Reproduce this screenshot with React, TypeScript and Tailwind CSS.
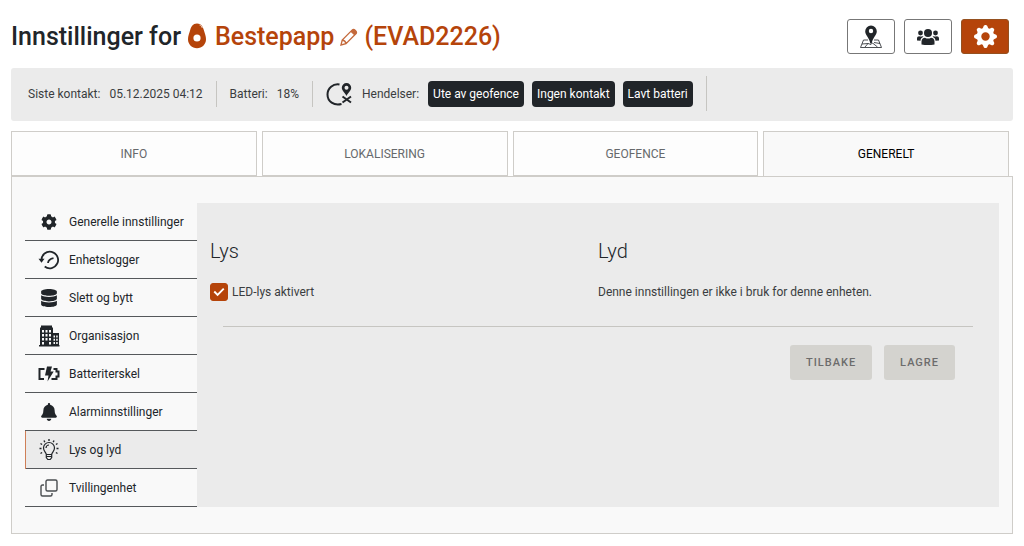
import { useState } from "react";
import type { ReactNode } from "react";
import { BsGearFill } from "react-icons/bs";
import { FaBell, FaCog, FaDatabase } from "react-icons/fa";

const accentColor = "#b5440a";

const tabs = ["INFO", "LOKALISERING", "GEOFENCE", "GENERELT"];

const events = ["Ute av geofence", "Ingen kontakt", "Lavt batteri"];

const menuItems: { label: string; icon: ReactNode }[] = [
  { label: "Generelle innstillinger", icon: <FaCog className="h-4 w-4" /> },
  { label: "Enhetslogger", icon: <HistoryIcon /> },
  { label: "Slett og bytt", icon: <FaDatabase className="h-[18px] w-4" /> },
  { label: "Organisasjon", icon: <BuildingIcon /> },
  { label: "Batteriterskel", icon: <BatteryIcon /> },
  { label: "Alarminnstillinger", icon: <FaBell className="h-[18px] w-4" /> },
  { label: "Lys og lyd", icon: <BulbIcon /> },
  { label: "Tvillingenhet", icon: <TwinIcon /> }
];

export default function App() {
  const [activeTab, setActiveTab] = useState("GENERELT");

  return (
    <main className="bg-white px-[11px] pt-[19px] pb-3 font-['Roboto','Liberation_Sans',sans-serif] text-xs leading-5 font-normal text-[#3a3d40]">
      <Header />
      <StatusBar />
      <nav className="mt-[10px] grid grid-cols-4 gap-[5px] pr-1">
        {tabs.map((tab) => (
          <button
            key={tab}
            type="button"
            onClick={() => setActiveTab(tab)}
            className={
              tab === activeTab
                ? "h-[45px] border border-b-0 border-[#cfcdc9] bg-[#f9f9f9] text-xs text-black"
                : "h-[45px] border border-[#cfcdc9] bg-[#fdfdfd] text-xs text-[#66696c]"
            }
          >
            {tab}
          </button>
        ))}
      </nav>
      <section className="flex border border-[#cfcdc9] bg-[#f9f9f9] px-[13px] pt-[26px] pb-[26px]">
        <SideMenu />
        <LightAndSound />
      </section>
    </main>
  );
}

function Header() {
  return (
    <header className="flex items-center justify-between pr-1">
      <h1 className="flex items-center text-[25px] leading-[35px] font-medium text-[#212529]">
        Innstillinger for
        <TrackerIcon />
        <span className="text-[#b5440a]">Bestepapp</span>
        <button type="button" aria-label="Endre navn" className="mx-1.5">
          <PencilIcon />
        </button>
        <span className="text-[#b5440a]">(EVAD2226)</span>
      </h1>
      <div className="flex gap-[9px]">
        <button
          type="button"
          aria-label="Kart"
          className="flex h-[35px] w-12 items-center justify-center rounded-[3px] border border-[#777] bg-white"
        >
          <MapPinIcon />
        </button>
        <button
          type="button"
          aria-label="Brukere"
          className="flex h-[35px] w-12 items-center justify-center rounded-[3px] border border-[#777] bg-white"
        >
          <PeopleIcon />
        </button>
        <button
          type="button"
          aria-label="Innstillinger"
          className="flex h-[35px] w-12 items-center justify-center rounded-[3px] border border-[#95501f] bg-[#b5440a] text-white"
        >
          <BsGearFill className="h-[23px] w-[23px]" />
        </button>
      </div>
    </header>
  );
}

function StatusBar() {
  return (
    <div className="mt-[14px] flex h-[53px] items-center rounded-[3px] bg-[#ebebeb] pb-0.5 pl-[17px]">
      <span>Siste kontakt:</span>
      <span className="ml-[9px]">05.12.2025 04:12</span>
      <span className="mx-[13px] h-[26px] w-px bg-[#c6c5c1]" />
      <span>Batteri:</span>
      <span className="ml-[9px]">18%</span>
      <span className="mx-[13px] h-[26px] w-px bg-[#c6c5c1]" />
      <GeofenceIcon />
      <span className="ml-2">Hendelser:</span>
      <div className="ml-[9px] flex gap-2">
        {events.map((event) => (
          <span
            key={event}
            className="rounded-[4px] bg-[#212529] px-[5px] py-[3px] text-white"
          >
            {event}
          </span>
        ))}
      </div>
      <span className="ml-[13px] h-[35px] w-px bg-[#c6c5c1]" />
    </div>
  );
}

function SideMenu() {
  const [active, setActive] = useState("Lys og lyd");

  return (
    <ul className="w-[172px] shrink-0">
      {menuItems.map(({ label, icon }) => (
        <li
          key={label}
          className={
            label === active
              ? "border-l border-[#cf7f57] bg-[#ebebeb] pl-0"
              : ""
          }
        >
          <button
            type="button"
            onClick={() => setActive(label)}
            className={
              label === active
                ? "flex h-[38px] w-full items-center border-b border-[#55585b] pl-[11px]"
                : "flex h-[38px] w-full items-center border-b border-[#55585b] pl-3"
            }
          >
            <span className="flex w-6 justify-center text-[#212529]">
              {icon}
            </span>
            <span className="ml-2 whitespace-nowrap text-[#212529]">
              {label}
            </span>
          </button>
        </li>
      ))}
    </ul>
  );
}

function LightAndSound() {
  const [enabled, setEnabled] = useState(true);

  return (
    <form className="min-w-0 flex-1 bg-[#ebebeb] px-[13px] pt-[34px]">
      <div className="grid grid-cols-2">
        <div>
          <h2 className="text-xl leading-7 font-light text-[#212529]">Lys</h2>
          <label className="mt-[17px] flex items-center gap-1">
            <span className="relative flex h-[18px] w-[18px]">
              <input
                type="checkbox"
                checked={enabled}
                onChange={(event) => setEnabled(event.target.checked)}
                className="h-full w-full appearance-none rounded-[3px] border border-[#b5440a] checked:bg-[#b5440a]"
              />
              {enabled && (
                <svg
                  viewBox="0 0 19 19"
                  className="pointer-events-none absolute inset-0"
                  fill="none"
                  stroke="white"
                  strokeWidth="2"
                >
                  <path d="M4.500 9 8 12.500l6.500-6.500" />
                </svg>
              )}
            </span>
            LED-lys aktivert
          </label>
        </div>
        <div>
          <h2 className="text-xl leading-7 font-light text-[#212529]">Lyd</h2>
          <p className="mt-[17px]">
            Denne innstillingen er ikke i bruk for denne enheten.
          </p>
        </div>
      </div>
      <hr className="mx-[13px] mt-6 border-[#c6c5c1]" />
      <div className="mt-[18px] mr-[31px] flex justify-end gap-3">
        <button
          type="button"
          className="h-[35px] rounded-[3px] bg-[#d4d3cf] px-4 text-[11px] font-medium tracking-[1px] text-[#6c6c6c]"
        >
          TILBAKE
        </button>
        <button
          type="button"
          className="h-[35px] rounded-[3px] bg-[#d4d3cf] px-4 text-[11px] font-medium tracking-[1px] text-[#6c6c6c]"
        >
          LAGRE
        </button>
      </div>
    </form>
  );
}

function TrackerIcon() {
  return (
    <svg viewBox="0 0 20 26" className="mr-2 mb-0.5 ml-1.5 h-[26px] w-5">
      <path
        d="M10 .5c4.200 0 5.800 3 6.800 6.500C17.800 10.300 19 13 19 16.300c0 5.200-4 8.900-9 8.900s-9-3.700-9-8.900C1 13 2.200 10.300 3.200 7 4.200 3.500 5.800.5 10 .5Z"
        fill={accentColor}
      />
      <circle cx="10" cy="15" r="3.600" fill="white" />
      <path d="M12.500 2c1.500.5 2.300 1.600 2.800 3" stroke="#f0d2c2" fill="none" />
    </svg>
  );
}

function PencilIcon() {
  return (
    <svg viewBox="0 0 18 18" className="h-[18px] w-[18px]">
      <path
        d="m1 17 1.200-5L12.300 1.900c1.700-1.500 5.200 1.700 3.800 3.600L6 15.700 1 17ZM2.200 12c2 .3 3.400 1.700 3.800 3.700"
        fill="none"
        stroke="#c4693b"
        strokeWidth="1.300"
      />
      <path
        d="m10.500 3.700 1.800-1.800c1.700-1.500 5.200 1.700 3.800 3.600l-1.800 1.800Z"
        fill="#c4693b"
      />
    </svg>
  );
}

function MapPinIcon() {
  return (
    <svg viewBox="0 0 24 24" className="h-6 w-6">
      <path
        d="M9 15H4.500L1.500 22.500h21L19.500 15H15M3 19l6-.5 3 1 1.500-1.500M6 22l3-3.500M13.500 18l5 4M15 17.500l6 1"
        fill="none"
        stroke="#212529"
        strokeWidth="0.800"
      />
      <path
        d="M12 .5A5.800 5.800 0 0 0 6.200 6.300c0 4 4 6 5.100 12.200h1.400c1.100-6.200 5.100-8.200 5.100-12.200A5.800 5.800 0 0 0 12 .5Zm0 3.300a2.200 2.200 0 1 1 0 4.400 2.200 2.200 0 0 1 0-4.400Z"
        fill="#212529"
        fillRule="evenodd"
      />
    </svg>
  );
}

function PeopleIcon() {
  return (
    <svg viewBox="0 0 24 18" className="h-[18px] w-6" fill="#212529">
      <circle cx="12" cy="5" r="4" />
      <circle cx="4.500" cy="5" r="2.400" />
      <circle cx="19.500" cy="5" r="2.400" />
      <path d="M5.500 16.500v-3c0-2.500 1.500-3.800 3.500-3.800 2 1.200 4 1.200 6 0 2 0 3.500 1.300 3.500 3.800v3c-4 .8-9 .8-13 0Z" />
      <path d="M1 12.500v-2C1 9 2 8.200 3.200 8.200c1 .5 2 .5 3.300 0l1 .6c-2 .9-2.800 2-3 3.900L1 12.500ZM23 12.500v-2c0-1.500-1-2.300-2.200-2.300-1 .5-2 .5-3.300 0l-1 .6c2 .9 2.800 2 3 3.900l3.500-.2Z" />
    </svg>
  );
}

function GeofenceIcon() {
  return (
    <svg viewBox="0 0 28 26" className="h-[26px] w-7 shrink-0">
      <path
        d="M13.500 3.500C7 2.300 1.500 7.500 1.500 13.500c0 7 6.500 11.500 14 9.500"
        fill="none"
        stroke="#212529"
        strokeWidth="2"
      />
      <path
        d="M20.500 2A4.700 4.700 0 0 0 15.800 6.700c0 3 3.200 4.900 4.700 8.300 1.500-3.400 4.700-5.300 4.700-8.300A4.700 4.700 0 0 0 20.500 2Zm0 2.800a2 2 0 1 1 0 4 2 2 0 0 1 0-4Z"
        fill="#212529"
        fillRule="evenodd"
      />
      <path
        d="m16.500 15.500 8.500 6M25 15.500l-8.500 6"
        stroke="#212529"
        strokeWidth="2"
      />
    </svg>
  );
}

function HistoryIcon() {
  return (
    <svg viewBox="0 0 22 20" className="h-5 w-[22px]">
      <path
        d="M3.500 10a8.300 8.300 0 1 1 3.200 6.500"
        fill="none"
        stroke="#212529"
        strokeWidth="1.800"
      />
      <path d="M.5 8.800h6l-3 4Z" fill="#212529" />
      <path
        d="M10 13c.3-2.500 2-4.200 5.500-4.800"
        fill="none"
        stroke="#212529"
        strokeWidth="1.800"
      />
    </svg>
  );
}

function BuildingIcon() {
  return (
    <svg viewBox="0 0 22 22" className="h-[22px] w-[22px]">
      <path d="M3 .5h11v2h1V8h6v12h.500v1.500H1V20h1V2.500h1Z" fill="#212529" />
      <path
        d="M4 5h2v2.500H4ZM7.500 5h2v2.500h-2ZM11 5h2v2.500h-2ZM4 9h2v2.500H4ZM7.500 9h2v2.500h-2ZM11 9h2v2.500h-2ZM4 13h2v2.500H4ZM7.500 13h2v2.500h-2ZM11 13h2v2.500h-2ZM4 17h2v2.500H4ZM11 17h2v2.500h-2ZM15.500 10.500H17v2h-1.500ZM18.200 10.500h1.500v2h-1.500ZM15.500 13.700H17v2h-1.500ZM18.200 13.700h1.500v2h-1.500ZM15.500 17H17v2h-1.500ZM18.200 17h1.500v2h-1.500Z"
        fill="#f9f9f9"
      />
    </svg>
  );
}

function BatteryIcon() {
  return (
    <svg viewBox="0 0 22 16" className="h-4 w-[22px]">
      <path
        d="M6.500 3H1.500v10H6M15.500 3h3v2.500h2v5h-2V13h-5"
        fill="none"
        stroke="#212529"
        strokeWidth="2"
      />
      <path d="M9 .5h5l-1.500 5h3.200L9.500 15.500l1-6H7Z" fill="#212529" />
    </svg>
  );
}

function BulbIcon() {
  return (
    <svg
      viewBox="0 0 20 22"
      className="h-[22px] w-5"
      fill="none"
      stroke="#212529"
      strokeWidth="1.200"
    >
      <path d="M7.300 15.500c0-2-2.800-3.300-2.800-6.500a5.500 5.500 0 0 1 11 0c0 3.200-2.800 4.500-2.800 6.500ZM7.300 17.500h5.400M7.300 15.500v3l1.500 2h2.400l1.500-2v-3M7 9a3 3 0 0 1 3-3" />
      <path
        d="M10 0v2M5 1.500l.8 1.600M15 1.500l-.8 1.600M1.500 4.500l1.600 1M18.500 4.500l-1.600 1M.5 9.500h2M17.500 9.500h2M1.500 14.500l1.600-1M18.500 14.500l-1.600-1"
        strokeWidth="1.400"
      />
    </svg>
  );
}

function TwinIcon() {
  return (
    <svg
      viewBox="0 0 18 18"
      className="h-[18px] w-[18px]"
      fill="none"
      stroke="#4a4d50"
      strokeWidth="1.400"
    >
      <rect x="6" y="1" width="11" height="11" rx="1.500" />
      <path d="M4 6H2.500Q1 6 1 7.500v8Q1 17 2.500 17h8q1.500 0 1.500-1.500V14" />
    </svg>
  );
}
